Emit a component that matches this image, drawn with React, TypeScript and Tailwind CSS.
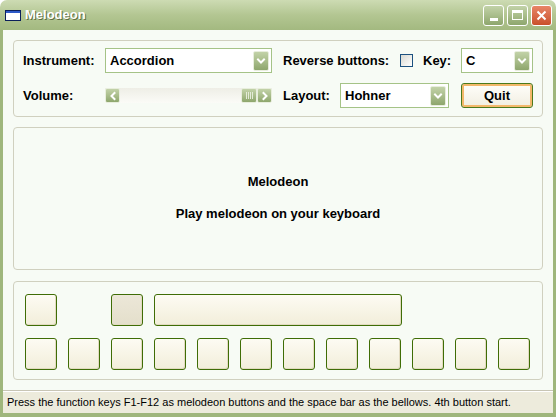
import React from "react";

const Chevron = ({ dir }: { dir: "down" | "left" | "right" }) => {
  const d =
    dir === "down"
      ? "M2 3.5 L5 6.5 L8 3.5"
      : dir === "left"
      ? "M6.5 2 L3.5 5 L6.5 8"
      : "M3.5 2 L6.5 5 L3.5 8";
  return (
    <svg width="10" height="10" viewBox="0 0 10 10">
      <path d={d} fill="none" stroke="white" strokeWidth="2" strokeLinecap="square" />
    </svg>
  );
};

const OliveBtn = ({ children, className }: { children?: React.ReactNode; className?: string }) => (
  <div
    className={
      "flex items-center justify-center rounded-[2px] border border-[#e8eedd] bg-linear-to-b from-[#c2d2a8] via-[#a9bd8b] to-[#8ea66d] " +
      (className ?? "")
    }
  >
    {children}
  </div>
);

const Combo = ({ value, width }: { value: string; width: string }) => (
  <div className={"flex h-[25px] items-center border border-[#a5c387] bg-white p-[2px] " + width}>
    <span className="flex-1 pl-[2px] text-[13px] font-bold text-black">{value}</span>
    <OliveBtn className="h-[20px] w-[16px]">
      <Chevron dir="down" />
    </OliveBtn>
  </div>
);

const Key = ({ pressed, width = "w-8" }: { pressed?: boolean; width?: string }) => (
  <div
    className={
      "h-8 rounded-[3px] border border-[#3f6d06] bg-linear-to-b shadow-[inset_-1px_-1px_0_#e2dbc1] " +
      width +
      (pressed ? " from-[#ece7d8] to-[#e4dfcb]" : " from-[#fdfbf3] to-[#f2eeda]")
    }
  />
);

export default function App() {
  return (
    <div className="flex h-[417px] w-[556px] flex-col font-['Liberation_Sans',Arial,sans-serif] text-black">
      {/* title bar */}
      <div className="flex h-[30px] items-center rounded-t-[7px] bg-linear-to-b from-[#cddbb3] via-[#b3c692] to-[#a3b980] pl-[5px] pr-[4px]">
        <div className="h-[11px] w-[16px] border border-[#0b1f5a] bg-white shadow-[inset_0_2px_0_#2d59c8]" />
        <span className="ml-[4px] text-[13px] font-bold text-white [text-shadow:1px_1px_0_#5d6e40]">
          Melodeon
        </span>
        <div className="ml-auto flex gap-[3px]">
          <OliveBtn className="h-[21px] w-[21px] rounded-[3px] border-white">
            <div className="mt-[8px] h-[3px] w-[8px] bg-white" />
          </OliveBtn>
          <OliveBtn className="h-[21px] w-[21px] rounded-[3px] border-white">
            <div className="h-[10px] w-[11px] border border-t-[3px] border-white" />
          </OliveBtn>
          <div className="flex h-[21px] w-[21px] items-center justify-center rounded-[3px] border border-white bg-linear-to-b from-[#e88566] to-[#c9502a]">
            <svg width="11" height="11" viewBox="0 0 11 11">
              <path d="M1.5 1.5 L9.5 9.5 M9.5 1.5 L1.5 9.5" stroke="white" strokeWidth="2" />
            </svg>
          </div>
        </div>
      </div>

      {/* client */}
      <div className="flex flex-1 flex-col border-x-[3px] border-b-[4px] border-[#9fb67c] bg-[#f7fbf5]">
        <div className="flex flex-col gap-[10px] px-[10px] pt-[10px]">
          {/* settings group */}
          <div className="flex h-[77px] flex-col gap-[10px] rounded-[4px] border border-[#d0d0bf] pl-[9px] pt-[7px]">
            <div className="flex items-center text-[13px] font-bold">
              <span className="w-[82px]">Instrument:</span>
              <Combo value="Accordion" width="w-[167px]" />
              <span className="ml-[11px] w-[117px]">Reverse buttons:</span>
              <div className="h-[13px] w-[13px] border border-[#1c5180] bg-linear-to-br from-[#d9d9d2] to-white" />
              <span className="ml-[10px] w-[38px]">Key:</span>
              <Combo value="C" width="w-[72px]" />
            </div>
            <div className="flex items-center text-[13px] font-bold">
              <span className="w-[82px]">Volume:</span>
              <div className="flex h-[15px] w-[167px] items-center bg-linear-to-b from-[#eeeee6] to-[#fbfbf7]">
                <OliveBtn className="h-[15px] w-[15px]">
                  <Chevron dir="left" />
                </OliveBtn>
                <div className="flex-1" />
                <OliveBtn className="h-[15px] w-[16px] gap-[1px]">
                  <div className="h-[7px] w-px bg-[#e4ebd8]" />
                  <div className="h-[7px] w-px bg-[#e4ebd8]" />
                  <div className="h-[7px] w-px bg-[#e4ebd8]" />
                  <div className="h-[7px] w-px bg-[#e4ebd8]" />
                </OliveBtn>
                <OliveBtn className="h-[15px] w-[15px]">
                  <Chevron dir="right" />
                </OliveBtn>
              </div>
              <span className="ml-[11px] w-[57px]">Layout:</span>
              <Combo value="Hohner" width="w-[109px]" />
              <div className="ml-[12px] flex h-[25px] w-[72px] items-center justify-center rounded-[3px] border border-[#4c7a1c] bg-linear-to-b from-[#fffefa] to-[#f1eee1] shadow-[inset_0_0_0_2px_#f3b86a]">
                Quit
              </div>
            </div>
          </div>

          {/* info group */}
          <div className="flex h-[143px] flex-col items-center justify-center gap-[12px] rounded-[4px] border border-[#d0d0bf] pb-[2px] text-[13px] font-bold">
            <span>Melodeon</span>
            <span>Play melodeon on your keyboard</span>
          </div>

          {/* buttons group */}
          <div className="mt-px flex h-[99px] flex-col gap-[12px] rounded-[4px] border border-[#d0d0bf] pl-[11px] pt-[12px]">
            <div className="flex">
              <Key />
              <div className="ml-[54px]">
                <Key pressed />
              </div>
              <div className="ml-[11px]">
                <Key width="w-[248px]" />
              </div>
            </div>
            <div className="flex gap-[11px]">
              {Array.from({ length: 12 }).map((_, i) => (
                <Key key={i} />
              ))}
            </div>
          </div>
        </div>

        {/* status bar */}
        <div className="mt-auto flex h-[23px] items-center border-t border-[#c8c5b5] bg-[#edebdc] pl-[4px] text-[11px] shadow-[inset_0_1px_0_white]">
          Press the function keys F1-F12 as melodeon buttons and the space bar as the bellows. 4th button start.
        </div>
      </div>
    </div>
  );
}
